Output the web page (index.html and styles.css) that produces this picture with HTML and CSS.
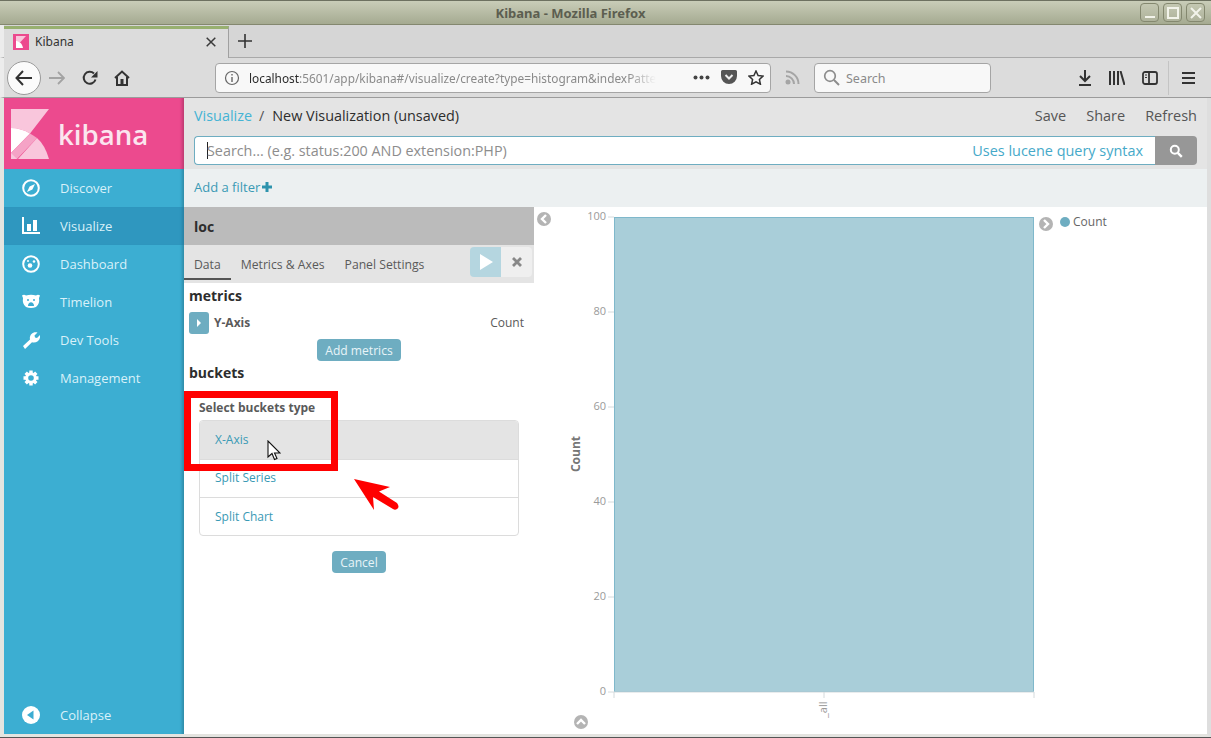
FILE: index.html
```html
<!DOCTYPE html>
<html lang="en">
<head>
<meta charset="utf-8">
<title>Kibana - Mozilla Firefox</title>
<link rel="stylesheet" href="styles.css">
</head>
<body>
<div class="window">
  <header class="titlebar">
    <span class="title">Kibana - Mozilla Firefox</span>
    <div class="winbtns">
      <span class="winbtn"><svg width="12" height="12" viewBox="0 0 12 12"><path d="M1 10h10" stroke="#f2f3ea" stroke-width="2"/></svg></span>
      <span class="winbtn"><svg width="12" height="12" viewBox="0 0 12 12"><rect x="1" y="1" width="10" height="10" fill="none" stroke="#f2f3ea" stroke-width="2"/></svg></span>
      <span class="winbtn"><svg width="12" height="12" viewBox="0 0 12 12"><path d="M1 1l10 10M11 1L1 11" stroke="#f2f3ea" stroke-width="2"/></svg></span>
    </div>
  </header>
  <div class="tabbar">
    <div class="tab">
      <svg class="favicon" width="16" height="16" viewBox="0 0 16 16"><rect width="16" height="16" fill="#ec4a8e"/><path d="M3 2h10L7 8.500 3 7z" fill="#f9c6dc"/><path d="M3 7c3 0 6 2 7 7H3z" fill="#fff"/></svg>
      <span class="tab-label">Kibana</span>
      <svg class="tab-close" width="10" height="10" viewBox="0 0 10 10"><path d="M.7.7l8.600 8.600M9.300.7L.7 9.300" stroke="#3a3a3a" stroke-width="1.500"/></svg>
    </div>
    <svg class="newtab" width="14" height="14" viewBox="0 0 14 14"><path d="M7 0v14M0 7h14" stroke="#333" stroke-width="1.600"/></svg>
  </div>
  <div class="toolbar">
    <span class="backbtn"><svg width="18" height="16" viewBox="0 0 18 16"><path d="M8 1L1.500 8 8 15M2 8h15" fill="none" stroke="#333" stroke-width="2"/></svg></span>
    <svg class="fwd" width="16" height="14" viewBox="0 0 16 14"><path d="M9 1l6 6-6 6M15 7H0" fill="none" stroke="#a3a3a3" stroke-width="1.800"/></svg>
    <svg class="reload" width="16" height="16" viewBox="0 0 16 16"><path d="M13.500 9.500A6 6 0 1 1 12 3.500" fill="none" stroke="#333" stroke-width="2"/><path d="M15.500 1v6.500H9z" fill="#333"/></svg>
    <svg class="home" width="16" height="16" viewBox="0 0 16 16"><path d="M1 8l7-6.500L15 8M3 7v8h10V7" fill="none" stroke="#333" stroke-width="2"/><rect x="6.500" y="9" width="3" height="6" fill="#333"/></svg>
    <div class="urlbar">
      <svg width="16" height="16" viewBox="0 0 16 16"><circle cx="8" cy="8" r="6.500" fill="none" stroke="#666" stroke-width="1.200"/><path d="M8 7v5M8 4v1.600" stroke="#666" stroke-width="1.400"/></svg>
      <span class="url"><span class="url-host">localhost</span>:5601/app/kibana#/visualize/create?type=histogram&amp;indexPatte</span>
      <svg class="dots" width="17" height="5" viewBox="0 0 17 5"><circle cx="2.500" cy="2.500" r="2" fill="#444"/><circle cx="8.500" cy="2.500" r="2" fill="#444"/><circle cx="14.500" cy="2.500" r="2" fill="#444"/></svg>
      <svg width="16" height="15" viewBox="0 0 16 15"><path d="M1.500 0h13A1.500 1.500 0 0 1 16 1.500V6A8 8 0 0 1 0 6V1.500A1.500 1.500 0 0 1 1.500 0z" fill="#555"/><path d="M4.500 5L8 8.500 11.500 5" fill="none" stroke="#eee" stroke-width="2"/></svg>
      <svg width="16" height="15" viewBox="0 0 16 15"><path d="M8 1l2.100 4.500 4.900.6-3.600 3.300 1 4.800L8 11.800l-4.400 2.400 1-4.800L1 6.100l4.900-.6z" fill="none" stroke="#333" stroke-width="1.500"/></svg>
    </div>
    <svg class="rss" width="15" height="15" viewBox="0 0 15 15"><circle cx="3" cy="12" r="2.500" fill="#a5a5a5"/><path d="M1 6a8 8 0 0 1 8 8M1 1.500A12.500 12.500 0 0 1 13.500 14" fill="none" stroke="#a5a5a5" stroke-width="2"/></svg>
    <div class="searchbar">
      <svg width="17" height="17" viewBox="0 0 17 17"><circle cx="7" cy="7" r="5.300" fill="none" stroke="#8c8c8c" stroke-width="1.700"/><path d="M11 11l5 5" stroke="#8c8c8c" stroke-width="2"/></svg>
      <span class="searchtext">Search</span>
    </div>
    <div class="tools">
      <svg width="14" height="16" viewBox="0 0 14 16"><path d="M7 0v11M2 6l5 5 5-5M1 15h12" fill="none" stroke="#333" stroke-width="2"/></svg>
      <svg width="16" height="14" viewBox="0 0 16 14"><path d="M1 0v14M5 0v14M9 0v14M11.500 0l4 14" fill="none" stroke="#333" stroke-width="2"/></svg>
      <svg width="16" height="14" viewBox="0 0 16 14"><rect x="1" y="1" width="14" height="12" rx="2" fill="none" stroke="#333" stroke-width="1.800"/><path d="M7 1v12" stroke="#333" stroke-width="1.800"/><path d="M3 4h2M3 6.500h2" stroke="#333"/></svg>
      <span class="toolsep"></span>
      <svg width="13" height="12" viewBox="0 0 13 12"><path d="M0 1h13M0 6h13M0 11h13" stroke="#333" stroke-width="2"/></svg>
    </div>
  </div>

  <div class="app">
    <nav class="sidebar">
      <div class="brand">
        <svg width="39" height="50" viewBox="0 0 39 50"><path d="M0 0H38L19 24.500Q10 19 0 19z" fill="#f9c6dc"/><path d="M0 19Q10 19 19 24.500L0 44z" fill="#fff"/><path d="M19 24.500L0 44 0 50H6L26 29Q22 26 19 24.500z" fill="#f5a3c6"/><path d="M0 44L6 50H0z" fill="#f9c6dc"/><path d="M26 29Q34 36 38 50H7z" fill="#f9c6dc"/></svg>
        <span class="brand-name">kibana</span>
      </div>
      <a class="navitem"><svg class="navicon" viewBox="0 0 18 18"><circle cx="9" cy="9" r="7.800" fill="none" stroke="#fff" stroke-width="2"/><path d="M13 5l-2.600 5.400L5 13l2.600-5.400z" fill="#fff"/></svg><span>Discover</span></a>
      <a class="navitem active"><svg class="navicon" viewBox="0 0 18 18"><path d="M1 0v16h17" fill="none" stroke="#fff" stroke-width="2"/><rect x="5" y="7" width="4" height="7" fill="#fff"/><rect x="11" y="3" width="4" height="11" fill="#fff"/></svg><span>Visualize</span></a>
      <a class="navitem"><svg class="navicon" viewBox="0 0 18 18"><circle cx="9" cy="9" r="7.800" fill="none" stroke="#fff" stroke-width="2"/><circle cx="8" cy="10.500" r="2.300" fill="#fff"/><circle cx="12" cy="6.500" r="1.300" fill="#fff"/><circle cx="6" cy="6" r="1" fill="#fff"/></svg><span>Dashboard</span></a>
      <a class="navitem"><svg class="navicon" viewBox="0 0 18 18"><path d="M0 2.500Q2 1 4 2.500 9 1 14 2.500 16 1 18 2.500L17 5q1 6-3 9-5 2-10 0Q0 11 1 5z" fill="#fff"/><circle cx="6" cy="7" r="1" fill="#3cacd2"/><circle cx="12" cy="7" r="1" fill="#3cacd2"/><path d="M6 13c0-5 6-5 6 0z" fill="#3cacd2"/></svg><span>Timelion</span></a>
      <a class="navitem"><svg class="navicon" viewBox="0 0 18 18"><path d="M1 15L8 8.500C7 4 11 0 15.500 1.500L12.500 4.500 13 6.500 15 7l3-3c1 5-3.500 8.500-8 7.300L3 18z" fill="#fff"/></svg><span>Dev Tools</span></a>
      <a class="navitem"><svg class="navicon" viewBox="0 0 18 18"><path d="M9 1.500v3M9 13.500v3M1.500 9h3M13.500 9h3M3.700 3.700l2.100 2.100M12.200 12.200l2.100 2.100M14.300 3.700l-2.100 2.100M5.800 12.200l-2.100 2.100" stroke="#fff" stroke-width="3.400"/><circle cx="9" cy="9" r="4.300" fill="none" stroke="#fff" stroke-width="3"/></svg><span>Management</span></a>
      <a class="navitem collapse"><svg class="navicon" viewBox="0 0 18 18"><circle cx="9" cy="9" r="9" fill="#fff"/><path d="M11.500 4.500v9L5 9z" fill="#3cacd2"/></svg><span>Collapse</span></a>
    </nav>

    <main class="content">
      <div class="topnav">
        <div class="crumbrow">
          <div class="crumbs"><a class="crumb-link">Visualize</a><span class="crumb-sep">/</span><span class="crumb-cur">New Visualization (unsaved)</span></div>
          <div class="actions"><span>Save</span><span>Share</span><span>Refresh</span></div>
        </div>
        <div class="querybar">
          <div class="queryinput"><span class="caret"></span><span class="placeholder">Search... (e.g. status:200 AND extension:PHP)</span><a class="lucene">Uses lucene query syntax</a></div>
          <button class="querybtn"><svg width="14" height="14" viewBox="0 0 14 14"><circle cx="5.800" cy="5.800" r="4" fill="none" stroke="#fff" stroke-width="2"/><path d="M8.800 8.800l4 4" stroke="#fff" stroke-width="2.400"/></svg></button>
        </div>
      </div>
      <div class="filterbar"><a>Add a filter</a><svg width="10" height="10" viewBox="0 0 10 10"><path d="M5 0v10M0 5h10" stroke="#2d93ad" stroke-width="3"/></svg></div>

      <div class="workspace">
        <section class="panel">
          <div class="indexname">loc</div>
          <div class="tabs">
            <a class="ptab on">Data</a><a class="ptab">Metrics &amp; Axes</a><a class="ptab">Panel Settings</a>
            <div class="runbtns">
              <span class="run"><svg width="14" height="16" viewBox="0 0 14 16"><path d="M1 0l13 8-13 8z" fill="#fff"/></svg></span>
              <span class="discard"><svg width="10" height="10" viewBox="0 0 10 10"><path d="M1 1l8 8M9 1L1 9" stroke="#888" stroke-width="2.800"/></svg></span>
            </div>
          </div>
          <div class="panelbody">
            <h3 class="sect">metrics</h3>
            <div class="agg">
              <span class="aggtoggle"><svg width="6" height="8" viewBox="0 0 6 8"><path d="M1 0l4 4-4 4z" fill="#fff"/></svg></span>
              <strong>Y-Axis</strong><span class="aggval">Count</span>
            </div>
            <div class="center"><button class="btn btn-wide">Add metrics</button></div>
            <h3 class="sect buckets">buckets</h3>
            <div class="picker">
              <div class="pickertitle">Select buckets type</div>
              <ul class="picklist">
                <li class="hover">X-Axis</li>
                <li>Split Series</li>
                <li>Split Chart</li>
              </ul>
              <div class="center"><button class="btn">Cancel</button></div>
            </div>
          </div>
          <div class="redbox"></div>
          <svg class="arrow" width="50" height="38" viewBox="0 0 50 38"><path d="M2 1L38 9 27 13.500 45 25Q48 29 45 31 43 32.500 41 31L21 19 22 32z" fill="#f00"/></svg>
          <svg class="cursor" width="14" height="21" viewBox="0 0 14 21"><path d="M1 1v16l4-3.500 2.500 6 2.500-1-2.500-5.500H13z" fill="#fff" stroke="#111" stroke-width="1.100"/></svg>
        </section>

        <section class="vis">
          <svg class="chart" width="673" height="527" viewBox="534 207 673 527">
            <g class="ticks">
              <path d="M608 217h6M608 312h6M608 407h6M608 502h6M608 597h6M608 692h6M614 692v6M824 692v6M1034 692v6"/>
            </g>
            <rect class="bar" x="614.500" y="217.500" width="419" height="474"/>
            <path d="M614 692h420" stroke="#d4dadc"/>
            <g class="ylab" text-anchor="end">
              <text x="606" y="220">100</text><text x="606" y="315">80</text><text x="606" y="410">60</text><text x="606" y="505">40</text><text x="606" y="600">20</text><text x="606" y="695">0</text>
            </g>
            <text class="ylab" transform="translate(827 718) rotate(-90)">_all</text>
            <text class="axistitle" transform="translate(580 454) rotate(-90)" text-anchor="middle">Count</text>
            <g>
              <circle cx="544" cy="219" r="7" fill="#b4b4b4"/><path d="M546 215l-4 4 4 4" fill="none" stroke="#fff" stroke-width="2.400"/>
              <circle cx="1046" cy="224" r="7" fill="#b4b4b4"/><path d="M1044 220l4 4-4 4" fill="none" stroke="#fff" stroke-width="2.400"/>
              <circle cx="581" cy="722" r="7" fill="#b4b4b4"/><path d="M577 724l4-4 4 4" fill="none" stroke="#fff" stroke-width="2.400"/>
            </g>
            <circle cx="1065" cy="222" r="5" fill="#6eadc1"/>
            <text class="legend" x="1073" y="226">Count</text>
          </svg>
        </section>
      </div>
    </main>
  </div>
</div>
</body>
</html>
```
FILE: styles.css
```css
* { box-sizing: border-box; }
html, body { margin: 0; padding: 0; }
body { width: 1211px; height: 738px; overflow: hidden; background: #fff; font-family: "Open Sans", "Noto Sans", sans-serif; }
.window { width: 1211px; height: 738px; display: flex; flex-direction: column; background: #e9e9e6; border-bottom: 1px solid #555; border-top: 1px solid #6d7160; }

.titlebar { height: 24px; flex: none; display: flex; align-items: center; justify-content: center; position: relative; padding-right: 70px; background: linear-gradient(#c9cdb8, #a5aa91); border-bottom: 1px solid #84886f; }
.title { font: bold 13px "Noto Sans", sans-serif; color: #5c5e50; }
.winbtns { position: absolute; right: 6px; top: 2px; display: flex; gap: 4px; }
.winbtn { width: 19px; height: 19px; border: 1px solid #84886f; border-radius: 4px; display: flex; align-items: center; justify-content: center; background: linear-gradient(#c4c8b2, #aeb29b); }

.tabbar { height: 33px; flex: none; display: flex; align-items: center; background: #d6d6d6; border-bottom: 1px solid #a9a9a9; border-left: 4px solid #ececec; }
.tab { width: 225px; height: 32px; margin-bottom: -1px; display: flex; align-items: center; background: #dcdcdc; border-top: 3px solid #98b070; border-right: 1px solid #a0a0a0; padding: 0 12px 3px 9px; font: 12px "Noto Sans", sans-serif; color: #333; }
.favicon { flex: none; }
.tab-label { margin-left: 6px; flex: 1; }
.newtab { margin-left: 9px; margin-bottom: 1px; }

.toolbar { height: 40px; flex: none; display: flex; align-items: center; background: #dcdcdc; border-bottom: 1px solid #9b9b9b; border-left: 4px solid #ececec; padding-left: 3px; position: relative; }
.backbtn { width: 34px; height: 34px; flex: none; border-radius: 50%; background: #fbfbfb; border: 1px solid #9a9a9a; display: flex; align-items: center; justify-content: center; }
.fwd { margin-left: 8px; flex: none; }
.reload { margin-left: 17px; flex: none; }
.home { margin-left: 16px; flex: none; }
.urlbar { width: 556px; height: 30px; flex: none; margin-left: 85px; display: flex; align-items: center; gap: 11px; padding: 0 6px 0 8px; background: #f8f8f8; border: 1px solid #a5a5a5; border-radius: 4px; font: 11.850px "Noto Sans", sans-serif; color: #8a8a8a; }
.urlbar svg { flex: none; }
.url { flex: 1; white-space: nowrap; overflow: hidden; margin-left: -2px; margin-right: 26px; -webkit-mask-image: linear-gradient(to right, #000 93%, transparent 100%); mask-image: linear-gradient(to right, #000 93%, transparent 100%); }
.url-host { color: #2b2b2b; }
.rss { margin-left: 14px; flex: none; }
.searchbar { width: 177px; height: 30px; flex: none; margin-left: 14px; display: flex; align-items: center; gap: 6px; padding-left: 8px; background: #f8f8f8; border: 1px solid #a5a5a5; border-radius: 4px; font: 12.500px "Noto Sans", sans-serif; color: #8a8a8a; }
.searchtext { padding-top: 1px; }
.tools { display: flex; align-items: center; margin-left: 87px; gap: 17px; }
.toolsep { width: 1px; height: 34px; background: #c4c4c4; margin: 0 -4px 0 -7px; }

.app { flex: 1; min-height: 0; display: flex; background: #fff; border-left: 4px solid #e4e4e0; border-right: 4px solid #dedede; border-bottom: 3px solid #e4e4e0; }
.sidebar { width: 180px; flex: none; display: flex; flex-direction: column; background: #3caed2; box-shadow: inset -4px 0 3px -2px rgba(0, 0, 0, .2); }
.brand { height: 71px; flex: none; display: flex; align-items: center; padding: 0 0 0 7px; background: #ec4a8e; box-shadow: inset -4px 0 3px -2px rgba(0, 0, 0, .2); }
.brand-name { margin-left: 8px; font: 600 27.600px "Open Sans", sans-serif; color: #fbe5ef; }
.navitem { height: 38px; flex: none; display: flex; align-items: center; padding-left: 18px; color: #d9f1f9; font-size: 13px; }
.navitem.active { background: #2f97bf; box-shadow: inset -4px 0 3px -2px rgba(0, 0, 0, .15); }
.navicon { width: 18px; height: 18px; flex: none; margin-right: 20px; }
.collapse { margin-top: auto; }

.content { flex: 1; min-width: 0; display: flex; flex-direction: column; }
.topnav { height: 71px; flex: none; background: #e4e4e4; padding: 0 10px; }
.crumbrow { height: 38px; display: flex; align-items: center; justify-content: space-between; padding-bottom: 4px; }
.crumbs { font-size: 14.400px; color: #2d2d2d; display: flex; }
.crumb-link { color: #45b3d4; }
.crumb-sep { margin: 0 8px 0 7px; color: #555; }
.actions { display: flex; gap: 20px; font-size: 14.500px; color: #555; }
.querybar { display: flex; height: 29px; }
.queryinput { flex: 1; display: flex; align-items: center; position: relative; padding: 0 12px 0 12px; background: #fff; border: 1px solid #6eadc1; border-right: 0; border-radius: 4px 0 0 4px; font-size: 14.350px; }
.caret { width: 1px; height: 17px; background: #222; margin-right: -1px; }
.placeholder { flex: 1; color: #8d8d8d; }
.lucene { color: #45a9c9; font-size: 14.450px; }
.querybtn { width: 42px; padding: 0; border: 0; background: #979797; border-radius: 0 4px 4px 0; display: flex; align-items: center; justify-content: center; }
.filterbar { height: 38px; flex: none; display: flex; align-items: center; gap: 2px; padding: 0 0 2px 10px; background: #ecf0f1; font-size: 13px; color: #3a9ab5; }

.workspace { flex: 1; min-height: 0; display: flex; }
.panel { width: 350px; flex: none; position: relative; }
.indexname { height: 38px; padding-left: 10px; display: flex; align-items: center; background: #bbb; font-weight: 700; font-size: 14px; color: #2d2d2d; }
.tabs { height: 38px; display: flex; align-items: flex-start; background: #e4e4e4; font-size: 12.200px; color: #5a5a5a; position: relative; }
.ptab { height: 35px; display: flex; align-items: center; padding: 5px 10px 0; border-bottom: 2px solid transparent; }
.ptab.on { border-bottom-color: #555; }
.runbtns { position: absolute; left: 286px; top: 2px; display: flex; height: 30px; border-radius: 4px; overflow: hidden; }
.run { width: 31px; background: #b5d6e0; display: flex; align-items: center; justify-content: center; }
.discard { width: 31px; background: #efefef; display: flex; align-items: center; justify-content: center; }
.panelbody { padding: 0 5px; }
.sect { margin: 0; font-size: 14px; font-weight: 700; color: #2d2d2d; line-height: 19px; padding-top: 3px; height: 23px; }
.agg { display: flex; align-items: center; height: 23px; margin-top: 5px; font-size: 12px; color: #5a5a5a; padding-right: 5px; }
.agg strong { margin-left: 5px; flex: 1; }
.aggtoggle { width: 20px; height: 22px; background: #6eadc1; border-radius: 3px; display: flex; align-items: center; justify-content: center; }
.center { display: flex; justify-content: center; }
.btn { height: 22px; padding: 0 8px; border: 0; border-radius: 4px; background: #6eadc1; color: #e8f4f8; font: 12.100px "Open Sans", sans-serif; }
.btn-wide { margin: 5px 0 0 0; }
.buckets { margin-top: -1px; }
.picker { padding: 14px 10px 0 10px; }
.pickertitle { height: 20px; padding-top: 2px; font-size: 12px; font-weight: 700; color: #5a5a5a; }
.picklist { list-style: none; margin: 3px 0 15px; padding: 0; border: 1px solid #dcdcdc; border-radius: 4px; font-size: 12px; color: #3a9ab5; overflow: hidden; }
.picklist li { height: 38px; display: flex; align-items: center; padding: 0 0 2px 15px; border-top: 1px solid #dcdcdc; }
.picklist li:first-child { border-top: 0; }
.picklist li:last-child { padding-bottom: 0; }
.picklist .hover { background: #e4e4e4; }
.redbox { position: absolute; left: 0; top: 184px; width: 154px; height: 80px; border: 7px solid #f00; pointer-events: none; }
.arrow { position: absolute; left: 168px; top: 271px; }
.cursor { position: absolute; left: 83px; top: 233px; }

.vis { flex: 1; min-width: 0; position: relative; }
.chart { display: block; position: absolute; left: 0; top: 0; }
.ticks path { stroke: #d4dadc; fill: none; }
.bar { fill: #a9ced9; stroke: #7fb8cb; }
.ylab { font: 11px "Open Sans", sans-serif; fill: #9a9a9a; }
.ylab text { font: 11px "Open Sans", sans-serif; fill: #9a9a9a; }
.axistitle { font: 700 12px "Open Sans", sans-serif; fill: #777; }
.legend { font: 12px "Open Sans", sans-serif; fill: #666; }
```
